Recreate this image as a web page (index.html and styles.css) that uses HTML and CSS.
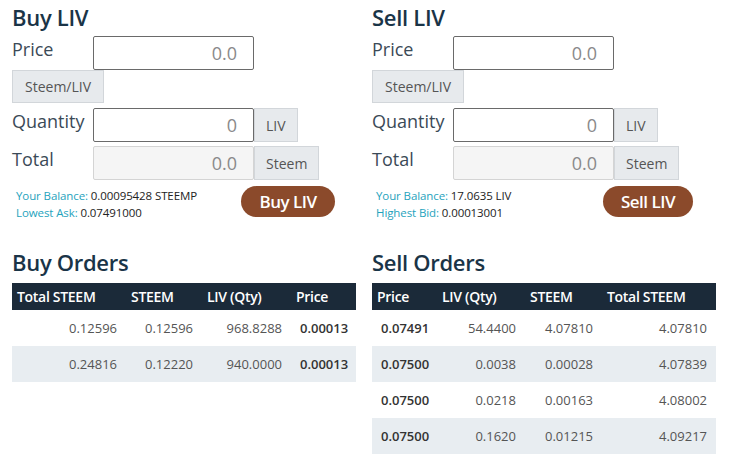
FILE: index.html
```html
<!DOCTYPE html>
<html lang="en">
    <head>
        <meta charset="UTF-8">
        <meta name="viewport" content="width=device-width, initial-scale=1.0">
        <title>LIV Market</title>
        <link rel="stylesheet" href="styles.css">
    </head>
    <body>
        <div class="market">
            <!-- buy form -->
            <div class="panel">
                <h2>Buy LIV</h2>
                <div class="field wrap">
                    <label>Price</label>
                    <input type="text" placeholder="0.0">
                    <span class="addon">Steem/LIV</span>
                </div>
                <div class="field">
                    <label>Quantity</label>
                    <input type="text" placeholder="0">
                    <span class="addon">LIV</span>
                </div>
                <div class="field">
                    <label>Total</label>
                    <input type="text" placeholder="0.0" disabled>
                    <span class="addon">Steem</span>
                </div>
                <div class="summary">
                    <div class="balance">
                        <p><span>Your Balance:</span> 0.00095428 STEEMP</p>
                        <p><span>Lowest Ask:</span> 0.07491000</p>
                    </div>
                    <div class="action"><button>Buy LIV</button></div>
                </div>
            </div>

            <!-- sell form -->
            <div class="panel">
                <h2>Sell LIV</h2>
                <div class="field wrap">
                    <label>Price</label>
                    <input type="text" placeholder="0.0">
                    <span class="addon">Steem/LIV</span>
                </div>
                <div class="field">
                    <label>Quantity</label>
                    <input type="text" placeholder="0">
                    <span class="addon">LIV</span>
                </div>
                <div class="field">
                    <label>Total</label>
                    <input type="text" placeholder="0.0" disabled>
                    <span class="addon">Steem</span>
                </div>
                <div class="summary">
                    <div class="balance">
                        <p><span>Your Balance:</span> 17.0635 LIV</p>
                        <p><span>Highest Bid:</span> 0.00013001</p>
                    </div>
                    <div class="action"><button>Sell LIV</button></div>
                </div>
            </div>

            <!-- order books -->
            <div class="panel orders">
                <h2>Buy Orders</h2>
                <table>
                    <colgroup>
                        <col style="width: 114px">
                        <col style="width: 76px">
                        <col style="width: 89px">
                        <col>
                    </colgroup>
                    <thead>
                        <tr><th>Total STEEM</th><th>STEEM</th><th>LIV (Qty)</th><th>Price</th></tr>
                    </thead>
                    <tbody>
                        <tr><td>0.12596</td><td>0.12596</td><td>968.8288</td><td class="price">0.00013</td></tr>
                        <tr><td>0.24816</td><td>0.12220</td><td>940.0000</td><td class="price">0.00013</td></tr>
                    </tbody>
                </table>
            </div>

            <div class="panel orders">
                <h2>Sell Orders</h2>
                <table>
                    <colgroup>
                        <col style="width: 65px">
                        <col style="width: 88px">
                        <col style="width: 77px">
                        <col>
                    </colgroup>
                    <thead>
                        <tr><th>Price</th><th>LIV (Qty)</th><th>STEEM</th><th>Total STEEM</th></tr>
                    </thead>
                    <tbody>
                        <tr><td class="price">0.07491</td><td>54.4400</td><td>4.07810</td><td>4.07810</td></tr>
                        <tr><td class="price">0.07500</td><td>0.0038</td><td>0.00028</td><td>4.07839</td></tr>
                        <tr><td class="price">0.07500</td><td>0.0218</td><td>0.00163</td><td>4.08002</td></tr>
                        <tr><td class="price">0.07500</td><td>0.1620</td><td>0.01215</td><td>4.09217</td></tr>
                    </tbody>
                </table>
            </div>
        </div>
    </body>
</html>
```

FILE: styles.css
```css
body {
    font-family: 'Open Sans', 'Liberation Sans', sans-serif;
    background-color: #fff;
    color: #333;
    margin: 0;
    padding: 0 12px;
}
.market {
    display: grid;
    grid-template-columns: 360px 360px;
}
h2 {
    margin: 0;
    padding-top: 2px;
    font-size: 22px;
    font-weight: 600;
    line-height: 30px;
    color: #1a3447;
    letter-spacing: -0.3px;
}
.field {
    display: flex;
    flex-wrap: wrap;
    width: 310px;
    margin-bottom: 4px;
}
.field:first-of-type {
    margin-top: 4px;
}
.field.wrap {
    margin-bottom: 5px;
}
.field label {
    width: 81px;
    font-size: 18px;
    line-height: 26px;
    color: #3b4a57;
}
.field input {
    width: 161px;
    height: 34px;
    box-sizing: border-box;
    border: 1px solid #6a6a6a;
    border-radius: 2px;
    padding: 0 16px 0 8px;
    font-family: inherit;
    font-size: 18px;
    text-align: right;
    color: #888;
    background-color: #fff;
}
.field input::placeholder {
    color: #8a8a8a;
}
.field input:disabled {
    background-color: #f5f5f5;
    border-color: #d4d4d4;
}
.addon {
    height: 34px;
    box-sizing: border-box;
    padding: 0 11px;
    display: flex;
    align-items: center;
    background-color: #e7eaed;
    border: 1px solid #d2d6da;
    font-size: 14px;
    color: #555;
}
.field.wrap .addon {
    height: 33px;
    padding: 0 12px;
}
.summary {
    display: grid;
    grid-template-columns: 212px 120px;
    padding-left: 4px;
    margin-top: 6px;
    align-items: start;
}
.balance {
    padding-top: 1px;
}
.balance p {
    margin: 0;
    font-size: 11.5px;
    line-height: 17px;
    color: #222;
    letter-spacing: -0.1px;
}
.balance span {
    color: #1fa3bd;
}
.action {
    text-align: center;
}
button {
    height: 31px;
    padding: 0 18px;
    border: none;
    border-radius: 16px;
    background-color: #8b4a2b;
    color: #fff;
    font-family: inherit;
    font-size: 17px;
    font-weight: 600;
    letter-spacing: -0.5px;
    cursor: pointer;
}
.orders {
    margin-top: 25px;
}
.orders h2 {
    line-height: 28px;
    margin-bottom: 7px;
}
table {
    width: 344px;
    border-collapse: collapse;
    table-layout: fixed;
    font-size: 13px;
}
th {
    background-color: #1b2a39;
    color: #fff;
    font-size: 14px;
    font-weight: 600;
    text-align: left;
    height: 27px;
    padding: 0 0 0 5px;
    letter-spacing: -0.3px;
}
td {
    height: 36px;
    padding: 0 9px;
    text-align: right;
    color: #555;
}
td.price {
    text-align: left;
    font-weight: 600;
    color: #333;
}
tbody tr:nth-child(even) {
    background-color: #e8edf1;
}
```
